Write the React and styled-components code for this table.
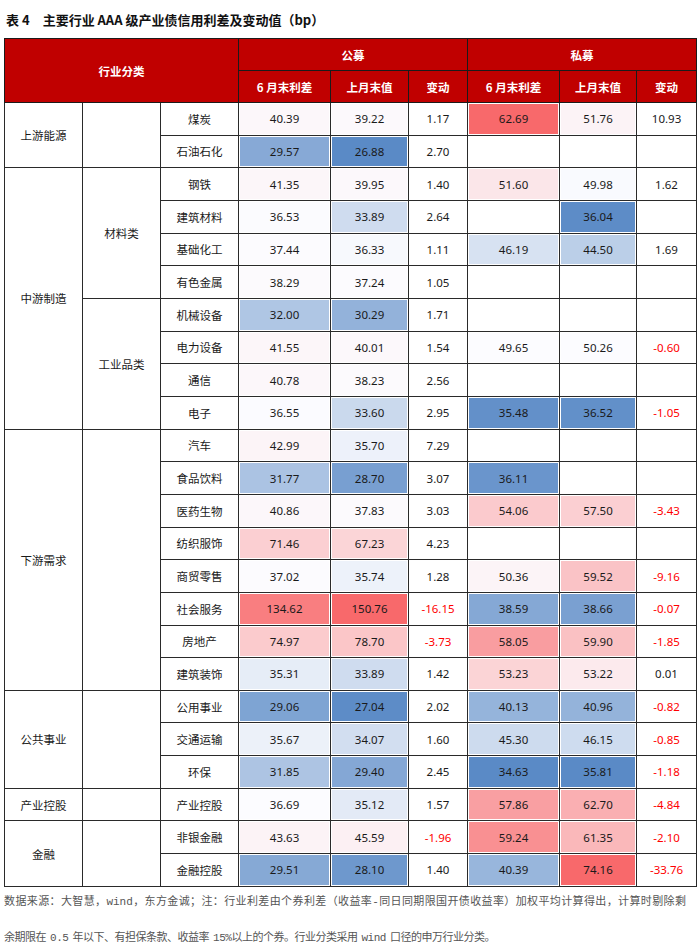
import React from "react";
import styled, { createGlobalStyle } from "styled-components";

const GlobalStyle = createGlobalStyle`
  html, body {
    margin: 0;
    padding: 0;
    background: #fff;
  }
  body {
    font-family: "Noto Sans", "Noto Sans CJK SC", sans-serif;
    color: #1a1a1a;
  }
`;

// [name, 公募6月, 公募上月, 公募变动, 私募6月, 私募上月, 私募变动]
const groups = [
  {
    label: "上游能源",
    subs: [
      {
        label: "",
        rows: [
          ["煤炭", 40.39, 39.22, 1.17, 62.69, 51.76, 10.93],
          ["石油石化", 29.57, 26.88, 2.7, null, null, null],
        ],
      },
    ],
  },
  {
    label: "中游制造",
    subs: [
      {
        label: "材料类",
        rows: [
          ["钢铁", 41.35, 39.95, 1.4, 51.6, 49.98, 1.62],
          ["建筑材料", 36.53, 33.89, 2.64, null, 36.04, null],
          ["基础化工", 37.44, 36.33, 1.11, 46.19, 44.5, 1.69],
          ["有色金属", 38.29, 37.24, 1.05, null, null, null],
        ],
      },
      {
        label: "工业品类",
        rows: [
          ["机械设备", 32.0, 30.29, 1.71, null, null, null],
          ["电力设备", 41.55, 40.01, 1.54, 49.65, 50.26, -0.6],
          ["通信", 40.78, 38.23, 2.56, null, null, null],
          ["电子", 36.55, 33.6, 2.95, 35.48, 36.52, -1.05],
        ],
      },
    ],
  },
  {
    label: "下游需求",
    subs: [
      {
        label: "",
        rows: [
          ["汽车", 42.99, 35.7, 7.29, null, null, null],
          ["食品饮料", 31.77, 28.7, 3.07, 36.11, null, null],
          ["医药生物", 40.86, 37.83, 3.03, 54.06, 57.5, -3.43],
          ["纺织服饰", 71.46, 67.23, 4.23, null, null, null],
          ["商贸零售", 37.02, 35.74, 1.28, 50.36, 59.52, -9.16],
          ["社会服务", 134.62, 150.76, -16.15, 38.59, 38.66, -0.07],
          ["房地产", 74.97, 78.7, -3.73, 58.05, 59.9, -1.85],
          ["建筑装饰", 35.31, 33.89, 1.42, 53.23, 53.22, 0.01],
        ],
      },
    ],
  },
  {
    label: "公共事业",
    subs: [
      {
        label: "",
        rows: [
          ["公用事业", 29.06, 27.04, 2.02, 40.13, 40.96, -0.82],
          ["交通运输", 35.67, 34.07, 1.6, 45.3, 46.15, -0.85],
          ["环保", 31.85, 29.4, 2.45, 34.63, 35.81, -1.18],
        ],
      },
    ],
  },
  {
    label: "产业控股",
    subs: [{ label: "", rows: [["产业控股", 36.69, 35.12, 1.57, 57.86, 62.7, -4.84]] }],
  },
  {
    label: "金融",
    subs: [
      {
        label: "",
        rows: [
          ["非银金融", 43.63, 45.59, -1.96, 59.24, 61.35, -2.1],
          ["金融控股", 29.51, 28.1, 1.4, 40.39, 74.16, -33.76],
        ],
      },
    ],
  },
];

const allRows = groups.flatMap((g) => g.subs.flatMap((s) => s.rows));

// Excel style 3-colour scale: blue (min) - white (median) - red (max)
const makeScale = (values) => {
  const v = values.filter((x) => x !== null).sort((a, b) => a - b);
  const n = v.length;
  const mid = n % 2 ? v[(n - 1) / 2] : (v[n / 2 - 1] + v[n / 2]) / 2;
  return { min: v[0], mid, max: v[n - 1] };
};

const WHITE = [252, 252, 255];
const BLUE = [90, 138, 198];
const RED = [248, 105, 107];

const mix = (a, b, t) =>
  `rgb(${a.map((c, i) => Math.round(c + (b[i] - c) * t)).join(",")})`;

const colorFor = (value, s) => {
  if (value === null) return null;
  if (value <= s.mid) return mix(WHITE, BLUE, (s.mid - value) / (s.mid - s.min));
  return mix(WHITE, RED, (value - s.mid) / (s.max - s.mid));
};

const pubScale = makeScale(allRows.flatMap((r) => [r[1], r[2]]));
const pri6Scale = makeScale(allRows.map((r) => r[4]));
const priPrevScale = makeScale(allRows.map((r) => r[5]));

const fmt = (v) => (v === null ? "" : v.toFixed(2));

const Page = styled.div`
  width: 700px;
  padding: 0 4px;
  box-sizing: border-box;
`;

const Title = styled.div`
  height: 38px;
  line-height: 40px;
  padding-left: 2px;
  font-family: "Noto Sans CJK SC", sans-serif;
  font-size: 13px;
  font-weight: 700;
  color: #111;
  white-space: nowrap;
`;

const TableNo = styled.span`
  margin-right: 13px;
`;

const Table = styled.table`
  width: 692px;
  table-layout: fixed;
  border-collapse: collapse;
  font-size: 11.5px;
`;

const HeadRow = styled.tr`
  height: 32px;
`;

const Th = styled.th`
  background: #c00000;
  color: #fff;
  font-family: "Noto Sans CJK SC", sans-serif;
  font-weight: 700;
  font-size: 11.5px;
  border: 1px solid #1b1b1b;
  padding: 0;
  text-align: center;
`;

const Row = styled.tr`
  height: 32.67px;
`;

const Td = styled.td`
  border: 1px solid #2a2a2a;
  padding: 0;
  text-align: center;
  vertical-align: middle;
  font-family: "Noto Sans CJK SC", sans-serif;
  background: ${(p) => p.$fill || "#fff"};
  box-shadow: ${(p) => (p.$fill ? "inset 0 0 0 1px #fff" : "none")};
`;

const NumTd = styled(Td)`
  font-family: "Noto Sans", "Noto Sans CJK SC", sans-serif;
  color: ${(p) => (p.$neg ? "#ff0000" : "#1a1a1a")};
`;

const Note = styled.div`
  margin-top: -3px;
  width: 682px;
  font-family: "Liberation Mono", "Noto Sans CJK SC", monospace;
  font-size: 11px;
  word-spacing: -2px;
  line-height: 36px;
  color: #555;
`;

const NoteLine = styled.div`
  white-space: nowrap;
  text-align: ${(p) => (p.$justify ? "justify" : "left")};
  text-align-last: ${(p) => (p.$justify ? "justify" : "left")};
  letter-spacing: ${(p) => (p.$justify ? "0" : "-0.5px")};
`;

const ChangeCell = ({ value }) => (
  <NumTd $neg={value !== null && value < 0}>{fmt(value)}</NumTd>
);

const ValueCell = ({ value, scale }) => (
  <NumTd $fill={colorFor(value, scale)}>{fmt(value)}</NumTd>
);

const App = () => {
  const body = [];
  groups.forEach((g) => {
    const gCount = g.subs.reduce((n, s) => n + s.rows.length, 0);
    g.subs.forEach((s, si) => {
      s.rows.forEach((r, ri) => {
        body.push(
          <Row key={r[0]}>
            {si === 0 && ri === 0 && <Td rowSpan={gCount}>{g.label}</Td>}
            {ri === 0 && <Td rowSpan={s.rows.length}>{s.label}</Td>}
            <Td>{r[0]}</Td>
            <ValueCell value={r[1]} scale={pubScale} />
            <ValueCell value={r[2]} scale={pubScale} />
            <ChangeCell value={r[3]} />
            <ValueCell value={r[4]} scale={pri6Scale} />
            <ValueCell value={r[5]} scale={priPrevScale} />
            <ChangeCell value={r[6]} />
          </Row>
        );
      });
    });
  });

  return (
    <Page>
      <GlobalStyle />
      <Title>
        <TableNo>表 4</TableNo>主要行业 AAA 级产业债信用利差及变动值（bp）
      </Title>
      <Table>
        <colgroup>
          <col style={{ width: 78 }} />
          <col style={{ width: 78 }} />
          <col style={{ width: 78 }} />
          <col style={{ width: 92 }} />
          <col style={{ width: 78 }} />
          <col style={{ width: 59 }} />
          <col style={{ width: 92 }} />
          <col style={{ width: 77 }} />
          <col style={{ width: 60 }} />
        </colgroup>
        <thead>
          <HeadRow>
            <Th colSpan={3} rowSpan={2}>行业分类</Th>
            <Th colSpan={3}>公募</Th>
            <Th colSpan={3}>私募</Th>
          </HeadRow>
          <HeadRow>
            <Th>6 月末利差</Th>
            <Th>上月末值</Th>
            <Th>变动</Th>
            <Th>6 月末利差</Th>
            <Th>上月末值</Th>
            <Th>变动</Th>
          </HeadRow>
        </thead>
        <tbody>{body}</tbody>
      </Table>
      <Note>
        <NoteLine $justify>
          数据来源：大智慧，wind，东方金诚；注：行业利差由个券利差（收益率-同日同期限国开债收益率）加权平均计算得出，计算时剔除剩
        </NoteLine>
        <NoteLine>
          余期限在 0.5 年以下、有担保条款、收益率 15%以上的个券。行业分类采用 wind 口径的申万行业分类。
        </NoteLine>
      </Note>
    </Page>
  );
};

export default App;
